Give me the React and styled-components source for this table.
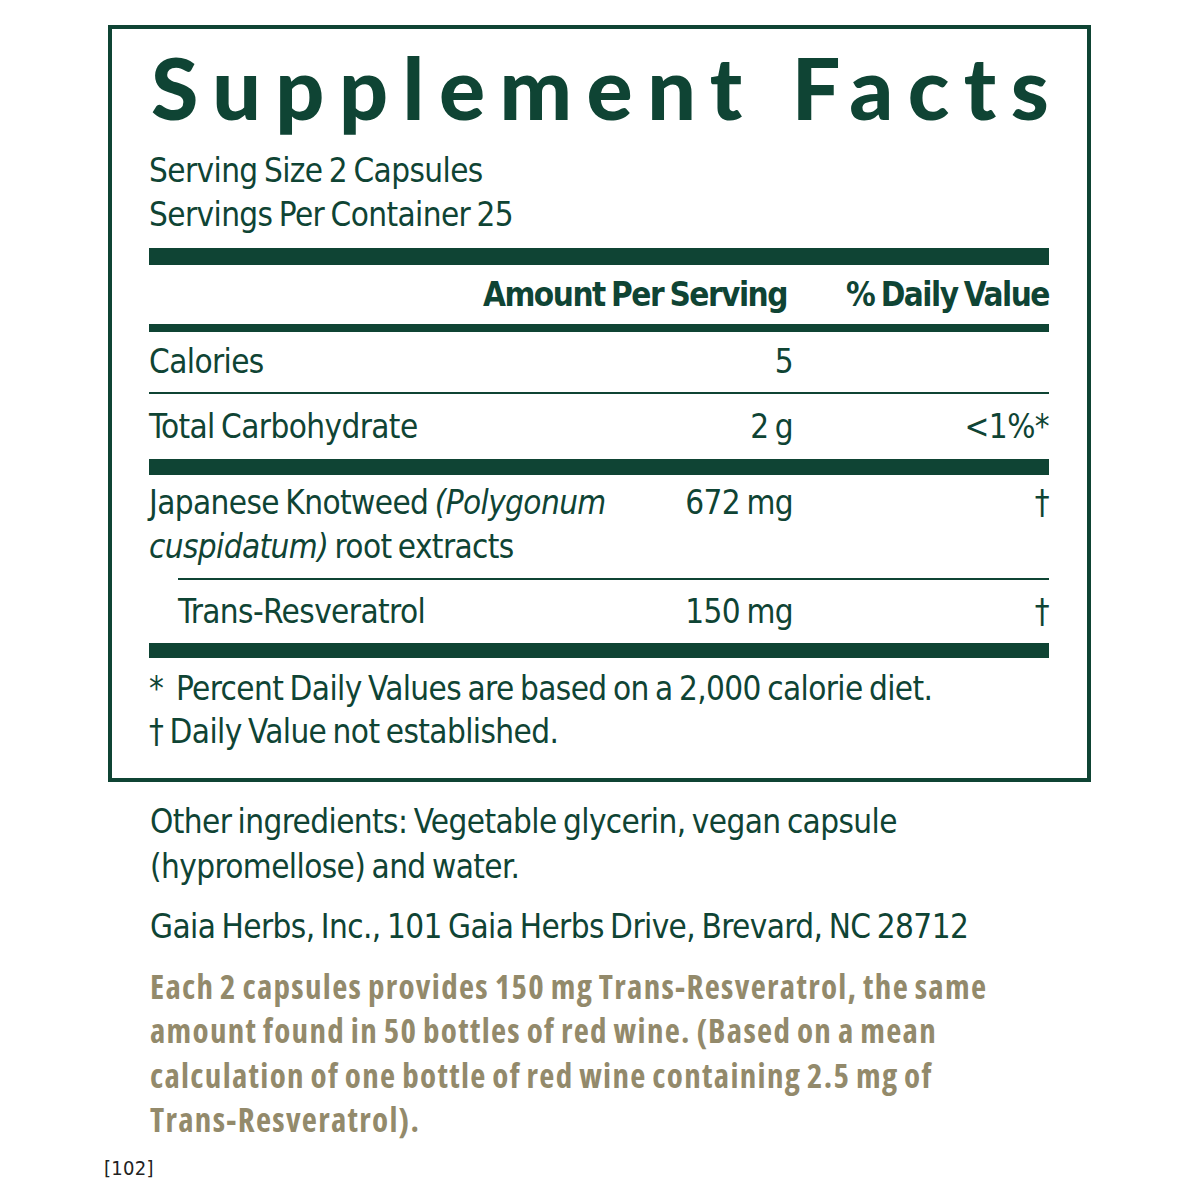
import React from 'react';
import styled, { createGlobalStyle } from 'styled-components';

const GREEN = '#0f4434';
const TAN = '#938a6b';
const NARROW = '"DejaVu Sans Condensed", "DejaVu Sans", sans-serif';
const CONDENSED_BOLD = '"Open Sans", "DejaVu Sans Condensed", sans-serif';

const GlobalStyle = createGlobalStyle`
  html, body {
    margin: 0;
    padding: 0;
    background: #fff;
  }
  body {
    font-family: ${NARROW};
    color: ${GREEN};
    letter-spacing: -0.6px;
    word-spacing: -2.5px;
  }
`;

const rows = [
  { name: 'Calories', amount: '5', dv: '', line: 'thin', height: 60 },
  { name: 'Total Carbohydrate', amount: '2 g', dv: '<1%*', line: 'thick', height: 65 },
];

const App = () => (
  <Page>
    <GlobalStyle />
    <Panel>
      <Title>Supplement Facts</Title>
      <Serving>
        <div>Serving Size 2 Capsules</div>
        <div>Servings Per Container 25</div>
      </Serving>
      <Bar size={17} />
      <HeaderRow>
        <HeadCell>Amount Per Serving</HeadCell>
        <HeadCell>% Daily Value</HeadCell>
      </HeaderRow>
      <Bar size={8} />
      {rows.map((r) => (
        <React.Fragment key={r.name}>
          <Row h={r.height}>
            <Name>{r.name}</Name>
            <Amount>{r.amount}</Amount>
            <Dv>{r.dv}</Dv>
          </Row>
          <Bar size={r.line === 'thin' ? 2 : 16} />
        </React.Fragment>
      ))}
      <Row h={103} top>
        <Name>
          Japanese Knotweed <i>(Polygonum</i>
          <br />
          <i>cuspidatum)</i> root extracts
        </Name>
        <Amount>672 mg</Amount>
        <Dv>†</Dv>
      </Row>
      <Bar size={2} indent={29} />
      <Row h={63} indent={29}>
        <Name>Trans-Resveratrol</Name>
        <Amount>150 mg</Amount>
        <Dv>†</Dv>
      </Row>
      <Bar size={15} />
      <Notes>
        <div>*&nbsp; Percent Daily Values are based on a 2,000 calorie diet.</div>
        <div>† Daily Value not established.</div>
      </Notes>
    </Panel>
    <Below>
      <Para>Other ingredients: Vegetable glycerin, vegan capsule (hypromellose) and water.</Para>
      <Para>Gaia Herbs, Inc., 101 Gaia Herbs Drive, Brevard, NC 28712</Para>
      <Para tan>
        Each 2 capsules provides 150 mg Trans-Resveratrol, the same amount found in 50 bottles of red
        wine. (Based on a mean calculation of one bottle of red wine containing 2.5 mg of
        Trans-Resveratrol).
      </Para>
    </Below>
    <Code>[102]</Code>
  </Page>
);

export default App;

const Page = styled.div`
  width: 1200px;
  height: 1200px;
  box-sizing: border-box;
  padding: 25px 0 0 108px;
  position: relative;
`;

const Panel = styled.section`
  width: 983px;
  box-sizing: border-box;
  border: 4px solid ${GREEN};
  padding: 0 38px 0 37px;
`;

const Title = styled.h1`
  margin: 0;
  padding: 8px 0 0 2px;
  font-family: "Lato", "Open Sans", sans-serif;
  font-weight: 900;
  font-size: 86px;
  line-height: 100px;
  letter-spacing: 14.5px;
  word-spacing: 0;
  white-space: nowrap;
`;

const Serving = styled.div`
  padding-top: 12px;
  padding-bottom: 11px;
  font-size: 33px;
  line-height: 44px;
`;

const Bar = styled.div`
  height: ${(p) => p.size}px;
  margin-left: ${(p) => p.indent || 0}px;
  background: ${GREEN};
`;

const HeaderRow = styled.div`
  display: grid;
  grid-template-columns: 1fr 256px;
  align-items: center;
  height: 59px;
  font-size: 33px;
  font-weight: 700;
  letter-spacing: -1.5px;
`;

const HeadCell = styled.div`
  text-align: right;
  white-space: nowrap;
  &:first-child {
    padding-right: 6px;
  }
`;

const Row = styled.div`
  display: grid;
  grid-template-columns: 1fr 150px 256px;
  align-items: ${(p) => (p.top ? 'start' : 'center')};
  height: ${(p) => p.h}px;
  box-sizing: border-box;
  padding-left: ${(p) => p.indent || 0}px;
  padding-top: ${(p) => (p.top ? 6 : 0)}px;
  font-size: 33px;
  line-height: 44px;
`;

const Name = styled.span`
  white-space: nowrap;
`;

const Amount = styled.span`
  text-align: right;
  white-space: nowrap;
`;

const Dv = styled.span`
  text-align: right;
  white-space: nowrap;
`;

const Notes = styled.div`
  padding: 9px 0 25px;
  font-size: 33px;
  line-height: 43px;
`;

const Below = styled.div`
  width: 860px;
  padding: 18px 0 0 42px;
`;

const Para = styled.p`
  margin: 0 0 15.5px;
  font-size: 33px;
  line-height: 44.5px;
  color: ${(p) => (p.tan ? TAN : GREEN)};
  font-weight: ${(p) => (p.tan ? 700 : 400)};
  font-family: ${(p) => (p.tan ? CONDENSED_BOLD : NARROW)};
  font-stretch: ${(p) => (p.tan ? '75%' : 'normal')};
  letter-spacing: ${(p) => (p.tan ? '1.3px' : '-0.6px')};
  word-spacing: ${(p) => (p.tan ? '-1.5px' : '-2.5px')};
`;

const Code = styled.div`
  position: absolute;
  left: 104px;
  top: 1156px;
  font-size: 20px;
  letter-spacing: 0.3px;
  color: #222;
`;
